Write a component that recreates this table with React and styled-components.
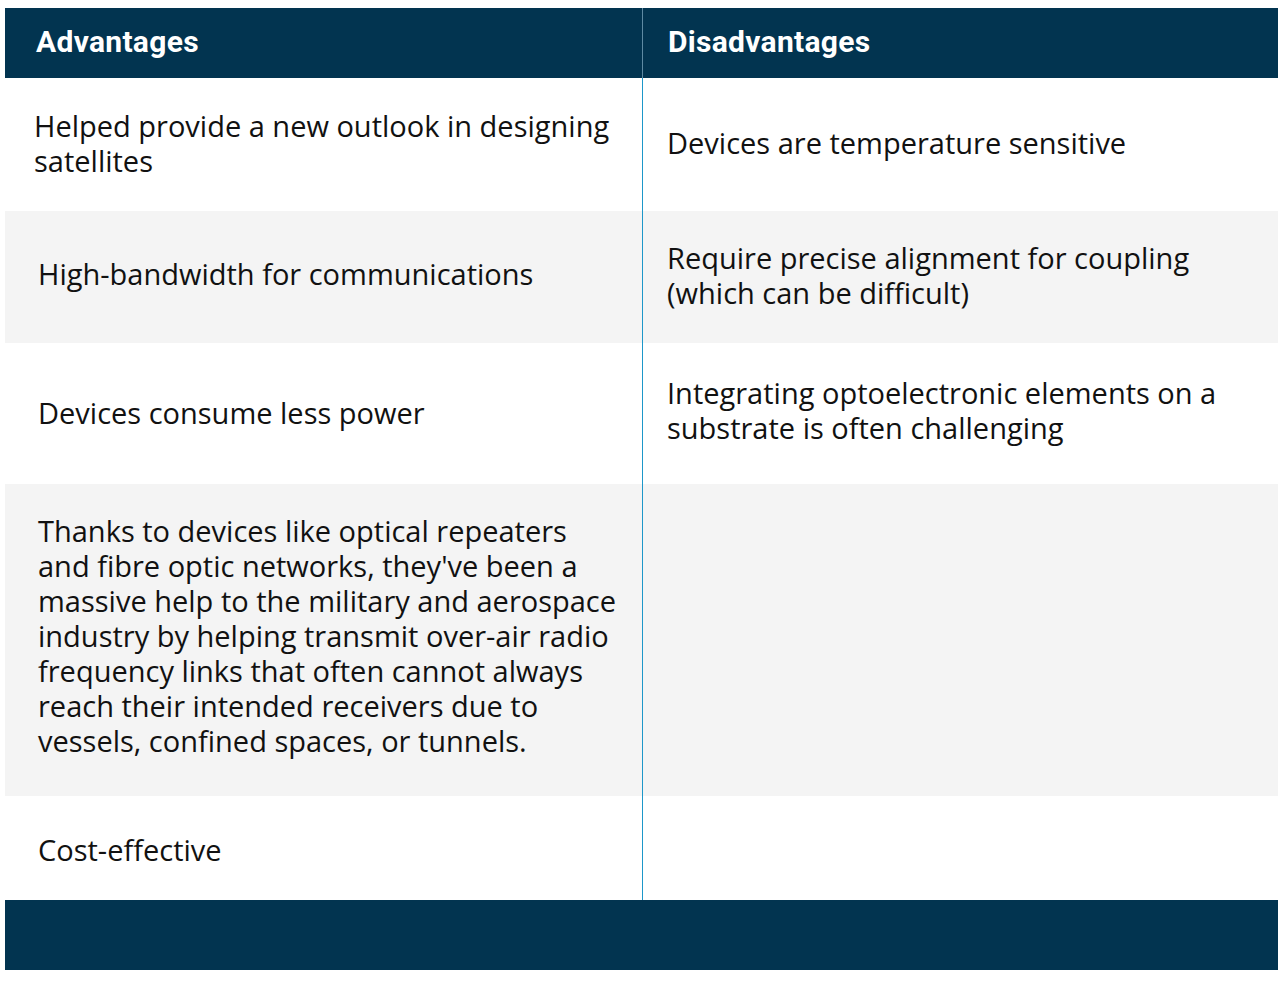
import React from 'react'
import styled, { createGlobalStyle } from 'styled-components'

const GlobalStyle = createGlobalStyle`
  body {
    margin: 0;
    background: #ffffff;
  }
`

const Page = styled.div`
  padding: 8px 1px 0 5px;
`

const Table = styled.div`
  display: grid;
  grid-template-columns: 637px 636px;
  width: 1273px;
`

const Head = styled.div`
  height: 70px;
  background: #023450;
  display: flex;
  align-items: center;
  padding: 0 0 3px ${props => props.indent || 31}px;
  border-left: ${props => props.divider ? '1px solid #5f8aa3' : 'none'};
  font-family: Roboto, "Liberation Sans", sans-serif;
  font-weight: 700;
  font-size: 30px;
  letter-spacing: 0.3px;
  color: #ffffff;
  box-sizing: border-box;
`

const Cell = styled.div`
  height: ${props => props.height}px;
  background: ${props => props.shade ? '#f4f4f4' : '#ffffff'};
  display: flex;
  align-items: center;
  padding: 0 16px 0 ${props => props.indent || 33}px;
  border-left: ${props => props.divider ? '1px solid #1d97c9' : 'none'};
  box-sizing: border-box;
  font-family: "Open Sans", "Liberation Sans", sans-serif;
  font-size: 29px;
  line-height: 35px;
  color: #111111;
`

const Text = styled.div`
  transform: translateY(${props => props.shift || 0}px);
`

const Footer = styled.div`
  grid-column: 1 / 3;
  height: 70px;
  background: #023450;
`

const rows = [
  {
    height: 133,
    left: 'Helped provide a new outlook in designing satellites',
    leftIndent: 29,
    leftShift: -2,
    right: 'Devices are temperature sensitive',
    rightShift: -2,
  },
  {
    height: 132,
    shade: true,
    left: 'High-bandwidth for communications',
    leftShift: -4,
    right: 'Require precise alignment for coupling (which can be difficult)',
    rightShift: -2,
  },
  {
    height: 141,
    left: 'Devices consume less power',
    leftShift: -1,
    right: 'Integrating optoelectronic elements on a substrate is often challenging',
    rightShift: -4,
  },
  {
    height: 312,
    shade: true,
    left: "Thanks to devices like optical repeaters and fibre optic networks, they've been a massive help to the military and aerospace industry by helping transmit over-air radio frequency links that often cannot always reach their intended receivers due to vessels, confined spaces, or tunnels.",
    leftShift: -5,
    right: '',
  },
  {
    height: 104,
    left: 'Cost-effective',
    leftShift: 1,
    right: '',
  },
]

export default function App() {
  return (
    <Page>
      <GlobalStyle />
      <Table>
        <Head>Advantages</Head>
        <Head divider indent={25}>Disadvantages</Head>
        {rows.map((row, index) => (
          <React.Fragment key={index}>
            <Cell height={row.height} shade={row.shade} indent={row.leftIndent}>
              <Text shift={row.leftShift}>{row.left}</Text>
            </Cell>
            <Cell height={row.height} shade={row.shade} divider indent={24}>
              <Text shift={row.rightShift}>{row.right}</Text>
            </Cell>
          </React.Fragment>
        ))}
        <Footer />
      </Table>
    </Page>
  )
}
